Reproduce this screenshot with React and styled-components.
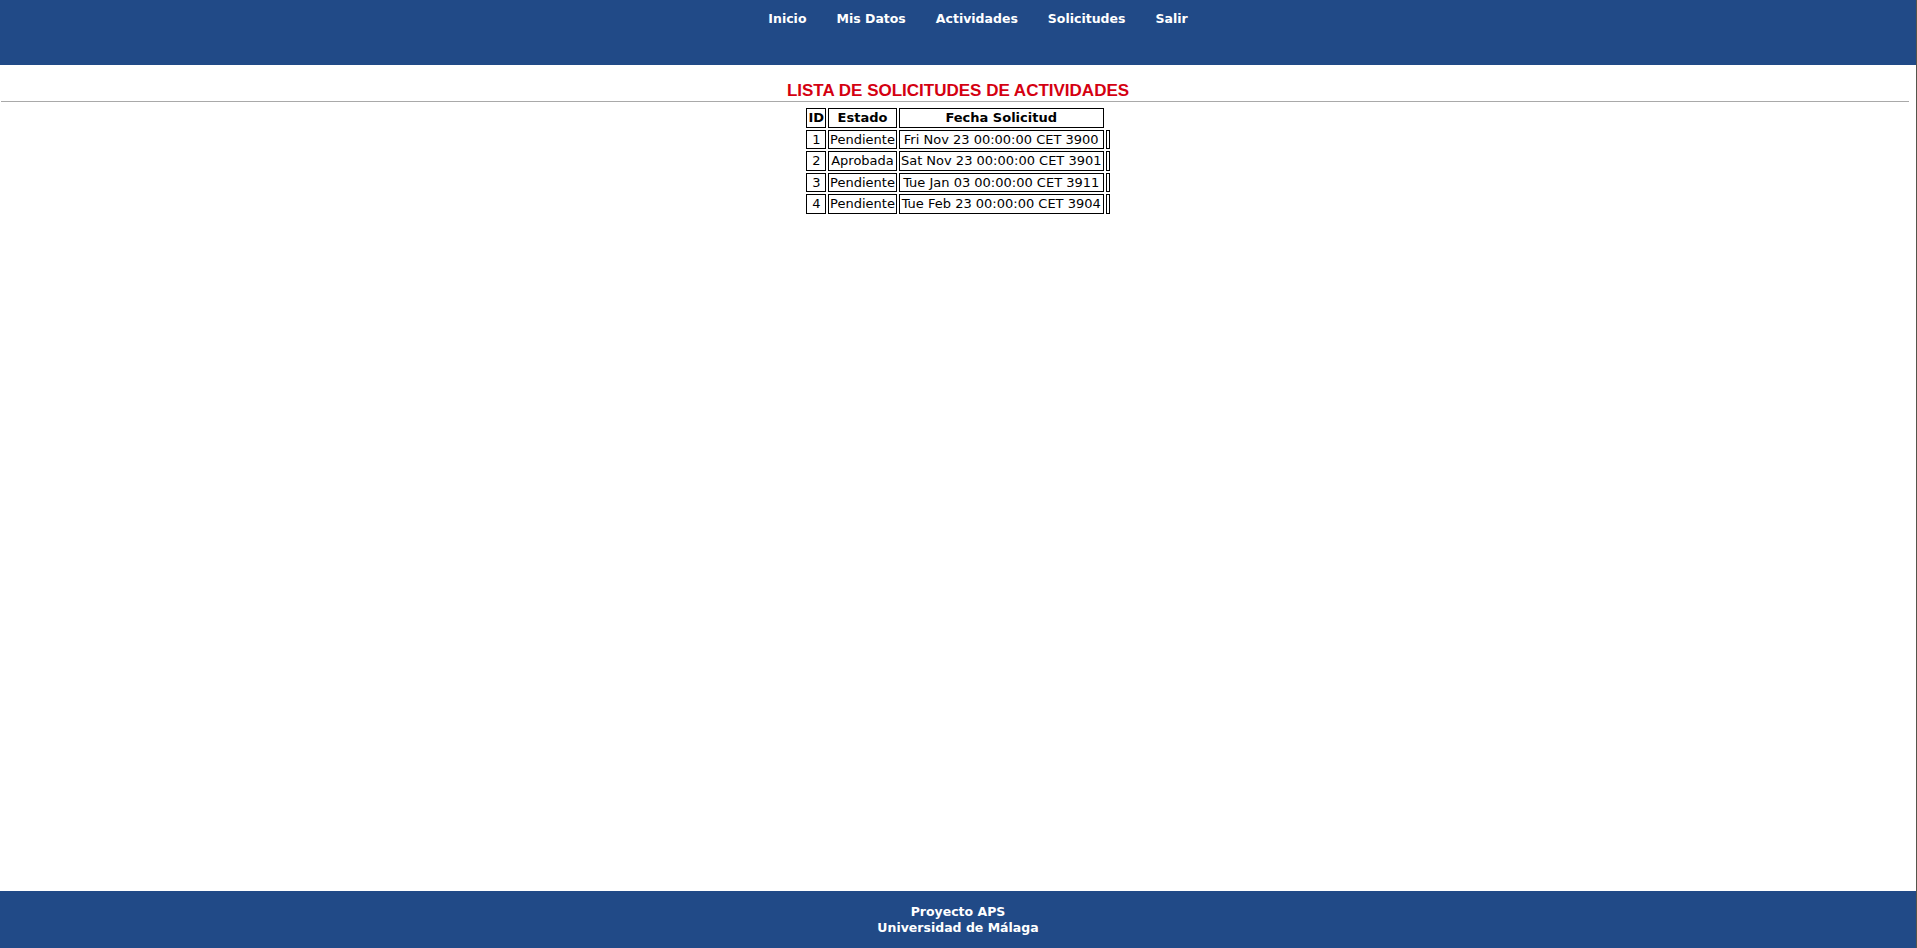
import React from 'react'
import styled, { createGlobalStyle } from 'styled-components'

const solicitudes = [
  { id: 1, estado: 'Pendiente', fecha: 'Fri Nov 23 00:00:00 CET 3900' },
  { id: 2, estado: 'Aprobada', fecha: 'Sat Nov 23 00:00:00 CET 3901' },
  { id: 3, estado: 'Pendiente', fecha: 'Tue Jan 03 00:00:00 CET 3911' },
  { id: 4, estado: 'Pendiente', fecha: 'Tue Feb 23 00:00:00 CET 3904' }
]

const menu = ['Inicio', 'Mis Datos', 'Actividades', 'Solicitudes', 'Salir']

const GlobalStyle = createGlobalStyle`
  html, body {
    margin: 0;
    padding: 0;
    background: #fff;
  }
  body {
    font-family: 'DejaVu Sans', Verdana, sans-serif;
    font-size: 13px;
  }
`

export default function App () {
  return (
    <>
      <GlobalStyle />
      <Page>
        <Header>
          <Menu>
            {menu.map(item => (
              <MenuItem key={item}>
                <MenuLink href="#">{item}</MenuLink>
              </MenuItem>
            ))}
          </Menu>
        </Header>

        <Main>
          <Title>LISTA DE SOLICITUDES DE ACTIVIDADES</Title>
          <Rule />
          <Table>
            <thead>
              <tr>
                <Th>ID</Th>
                <Th>Estado</Th>
                <Th>Fecha Solicitud</Th>
              </tr>
            </thead>
            <tbody>
              {solicitudes.map(s => (
                <tr key={s.id}>
                  <Td>{s.id}</Td>
                  <Td>{s.estado}</Td>
                  <Td>{s.fecha}</Td>
                  <Td />
                </tr>
              ))}
            </tbody>
          </Table>
        </Main>

        <Footer>
          <div>Proyecto APS</div>
          <div>Universidad de Málaga</div>
        </Footer>
      </Page>
    </>
  )
}

const Page = styled.div`
  min-height: 100vh;
  display: flex;
  flex-direction: column;
  border-right: 1px solid #55554a;
  box-sizing: border-box;
`

const Header = styled.header`
  background-color: #214a87;
  height: 65px;
`

const Menu = styled.ul`
  list-style: none;
  margin: 0;
  padding: 11px 0 0 40px;
  display: flex;
  justify-content: center;
`

const MenuItem = styled.li`
  padding: 0 15px;
  line-height: 15px;
`

const MenuLink = styled.a`
  color: #fff;
  font-weight: bold;
  font-size: 12.5px;
  text-decoration: none;
`

const Main = styled.main`
  flex: 1;
  padding-top: 16px;
`

const Title = styled.h1`
  margin: 0;
  text-align: center;
  font-family: 'Liberation Sans', Arial, sans-serif;
  font-size: 17px;
  font-weight: bold;
  color: #d40011;
  line-height: 20px;
`

const Rule = styled.hr`
  border: 0;
  border-top: 1px solid #a9a9a9;
  margin: 0 7px 0 1px;
  height: 0;
`

const Table = styled.table`
  margin: 4px auto 0;
  border-collapse: separate;
  border-spacing: 2px;
  font-size: 13px;
  color: #000;
`

const Th = styled.th`
  border: 1px solid #000;
  padding: 1px;
  line-height: 15.5px;
  font-weight: bold;
  text-align: center;
`

const Td = styled.td`
  border: 1px solid #000;
  padding: 1px;
  line-height: 15.5px;
  text-align: center;
`

const Footer = styled.footer`
  background-color: #214a87;
  height: 57px;
  box-sizing: border-box;
  padding-top: 13px;
  color: #fff;
  font-weight: bold;
  font-size: 12.5px;
  line-height: 16px;
  text-align: center;
`
